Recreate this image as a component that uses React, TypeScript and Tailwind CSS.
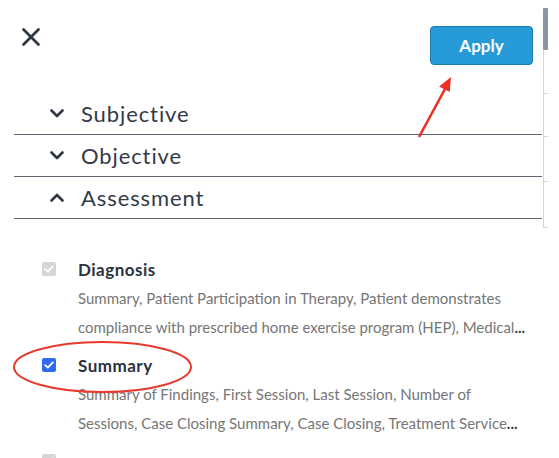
import React from "react";

const sections = [
  { label: "Subjective", open: false },
  { label: "Objective", open: false },
  { label: "Assessment", open: true },
];

const items = [
  {
    title: "Diagnosis",
    checked: false,
    disabled: true,
    lines: [
      "Summary, Patient Participation in Therapy, Patient demonstrates",
      "compliance with prescribed home exercise program (HEP), Medical",
    ],
  },
  {
    title: "Summary",
    checked: true,
    disabled: false,
    lines: [
      "Summary of Findings, First Session, Last Session, Number of",
      "Sessions, Case Closing Summary, Case Closing, Treatment Service",
    ],
  },
];

function Chevron({ up }: { up: boolean }) {
  return (
    <svg width="14" height="9" viewBox="0 0 14 9" className="shrink-0">
      <path
        d={up ? "M1.5 7.5 7 2l5.5 5.5" : "M1.5 1.5 7 7l5.5-5.5"}
        fill="none"
        stroke="#2f3644"
        strokeWidth="2.6"
        strokeLinecap="round"
        strokeLinejoin="round"
      />
    </svg>
  );
}

function Check({ checked, disabled }: { checked: boolean; disabled: boolean }) {
  const bg = checked ? "bg-[#2f6bed]" : disabled ? "bg-[#d6d6d6]" : "bg-white";
  return (
    <div className={`flex h-[14px] w-[14px] items-center justify-center rounded-[2px] ${bg}`}>
      <svg width="10" height="8" viewBox="0 0 10 8">
        <path
          d="M1.2 4.2 3.8 6.6 8.8 1.4"
          fill="none"
          stroke="#fff"
          strokeWidth="1.8"
          strokeLinecap="round"
          strokeLinejoin="round"
        />
      </svg>
    </div>
  );
}

export default function App() {
  return (
    <div className="relative flex h-[458px] w-[559px] overflow-hidden bg-white font-['Lato',sans-serif]">
      <div className="w-[542px] shrink-0">
        {/* top bar: close + apply */}
        <div className="flex h-[93px] items-start justify-between">
          <button className="ml-[21px] mt-[27px]">
            <svg width="20" height="20" viewBox="0 0 20 20">
              <path
                d="M2.5 2.5l15 15M17.5 2.5l-15 15"
                stroke="#2f3644"
                strokeWidth="2.8"
                strokeLinecap="round"
              />
            </svg>
          </button>
          <button className="mr-[9px] mt-[26px] h-[39px] w-[103px] rounded-[4px] border border-[#1c7cb1] bg-[#279bd8] text-[17px] font-bold text-white">
            Apply
          </button>
        </div>

        {/* accordion headers */}
        <div className="ml-[14px]">
          {sections.map((s) => (
            <div
              key={s.label}
              className="flex h-[42px] items-center gap-[17px] border-b border-[#5f6673] pl-[36px]"
            >
              <Chevron up={s.open} />
              <span className="text-[22px] tracking-[0.9px] text-[#333a48]">{s.label}</span>
            </div>
          ))}
        </div>

        {/* assessment items */}
        <div className="flex flex-col gap-[12px] pl-[42px] pt-[39px]">
          {items.map((it) => (
            <div key={it.title} className="flex gap-[22px]">
              <div className="pt-[4px]">
                <Check checked={it.checked} disabled={it.disabled} />
              </div>
              <div>
                <div className="text-[17px] font-bold leading-[24px] tracking-[0.5px] text-[#2b3140]">
                  {it.title}
                </div>
                <div className="mt-[2px] text-[15px] leading-[29px] text-[#767676]">
                  <div className="whitespace-nowrap">{it.lines[0]}</div>
                  <div className="whitespace-nowrap">
                    {it.lines[1]}
                    <b className="text-[#333a48]">...</b>
                  </div>
                </div>
              </div>
            </div>
          ))}
          {/* next item, only its box peeks in at the bottom */}
          <div className="pt-[4px]">
            <Check checked={false} disabled={true} />
          </div>
        </div>
      </div>

      {/* scrollbar of the list behind */}
      <div className="flex flex-col pt-[8px] pl-[1px]">
        <div className="h-[42px] w-[5px] rounded-[1px] bg-[#8b949f]" />
        <div className="h-[44px] w-[5px] border-b border-l border-[#d3d8de]" />
        <div className="h-[43px] w-[5px] border-b border-l border-[#d3d8de]" />
        <div className="h-[45px] w-[5px] border-b border-l border-[#d3d8de]" />
        <div className="h-[46px] w-[5px] border-b border-l border-[#d3d8de]" />
      </div>

      {/* red annotations */}
      <svg className="pointer-events-none absolute inset-0" width="559" height="458">
        <ellipse cx="102.5" cy="367" rx="88.5" ry="25" fill="none" stroke="#e8392c" strokeWidth="2" />
        <line x1="419" y1="137" x2="445" y2="89" stroke="#ee3024" strokeWidth="2.6" />
        <polygon points="451,77 449.7,92.1 439.1,86.5" fill="#ee3024" />
      </svg>
    </div>
  );
}
